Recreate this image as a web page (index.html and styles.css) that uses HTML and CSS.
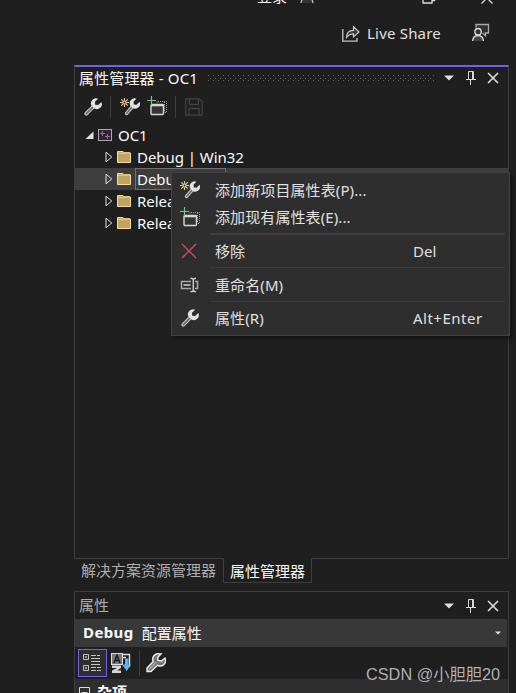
FILE: index.html
```html
<!DOCTYPE html>
<html lang="zh-CN">

<head>
	<meta charset="utf-8">
	<title>属性管理器 - OC1</title>
	<link rel="stylesheet" href="styles.css">
</head>

<body>

	<!-- Shared icons -->
	<svg class="defs" width="0" height="0">
		<symbol id="wrench" viewBox="0 0 18 18">
			<path d="M9.5 8.5L2.3 15.7" stroke="#c8c8c8" stroke-width="3.8" stroke-linecap="round"/>
			<path d="M9 9L2.4 15.6" stroke="#68686a" stroke-width="1.6" stroke-linecap="round"/>
			<path d="M14.2 .8A5 5 0 0 0 7.4 7.4L10.4 10.6A5 5 0 0 0 17.3 4L14.2 7L11.2 6.8L11 3.8Z" fill="#e2e2e2"/>
		</symbol>
		<symbol id="new-wrench" viewBox="0 0 20 18">
			<path d="M12.4 8.6L6.6 15.4" stroke="#c8c8c8" stroke-width="3.6" stroke-linecap="round"/>
			<path d="M12 9.2L6.7 15.3" stroke="#68686a" stroke-width="1.4" stroke-linecap="round"/>
			<path d="M16.4 .8A4.8 4.8 0 0 0 10.2 7.4L13 10.2A4.8 4.8 0 0 0 19.5 3.8L16.6 6.7L13.8 6.6L13.6 3.6Z" fill="#e2e2e2"/>
			<g stroke="#e8cc91" stroke-width="1.1">
				<path d="M4.5 0V2.8M4.5 6.2V9M0 4.5H2.8M6.2 4.5H9M1.3 1.3L3.3 3.3M5.7 5.7L7.7 7.7M7.7 1.3L5.7 3.3M3.3 5.7L1.3 7.7"/>
				<circle cx="4.5" cy="4.5" r="1.5" fill="none"/>
			</g>
		</symbol>
		<symbol id="add-sheet" viewBox="0 0 20 20">
			<path d="M10 6.5V5.5H19.5V16.5H18M17.5 6V16" fill="none" stroke="#aaa" stroke-dasharray="1 1"/>
			<rect x="4" y="8.5" width="12.5" height="10" rx="1" fill="#343434" stroke="#d6d6d6" stroke-width="1.4"/>
			<path d="M4 9.2H16.5" stroke="#d6d6d6" stroke-width="2.2"/>
			<path d="M4.5 0V9M0 4.5H9" stroke="#73c977" stroke-width="1.2"/>
		</symbol>
		<symbol id="folder" viewBox="0 0 14 12">
			<path d="M.5 .5H6L7 2H13.5V11.5H.5Z" fill="#c1a364" stroke="#fbdb96"/>
			<path d="M1 2.6H6L7.5 1.5H13" fill="none" stroke="#f3d28c" stroke-width=".8"/>
		</symbol>
		<symbol id="twisty" viewBox="0 0 8 12">
			<path d="M1 1.2V10.8L6.8 6Z" fill="none" stroke="#e0e0e0"/>
		</symbol>
		<symbol id="arrow" viewBox="0 0 10 6">
			<path d="M0 .5H10L5 5.5Z" fill="#e0e0e0"/>
		</symbol>
		<symbol id="pin" viewBox="0 0 10 14">
			<path d="M2.5 8V.5H7.500V8" fill="none" stroke="#d8d8d8"/>
			<path d="M6.500 1V8M0 8.500H10M4.500 9V14" stroke="#d8d8d8"/>
		</symbol>
		<symbol id="close" viewBox="0 0 12 12">
			<path d="M1 1L11 11M11 1L1 11" stroke="#dcdcdc" stroke-width="1.6"/>
		</symbol>
	</svg>

	<div class="titlebar">
		<span class="login">登录</span>
		<svg class="person" width="14" height="8" viewBox="0 0 14 8"><path d="M1 8C1.500 4 3 3 7 3S12.500 4 13 8" fill="#333" stroke="#bbb" stroke-width="1.300"/></svg>
		<svg class="restore" width="14" height="10" viewBox="0 0 14 10"><path d="M1 0V9H10V0M10 6.500H12.500V0" fill="none" stroke="#ddd" stroke-width="1.300"/></svg>
		<svg class="quit" width="14" height="12" viewBox="0 0 14 12"><path d="M1.500 11.500L12.500 .5M12.500 11.500L1.500 .5" stroke="#ddd" stroke-width="1.300"/></svg>
	</div>

	<div class="sharebar">
		<svg width="18" height="18" viewBox="0 0 18 18">
			<path d="M.8 4V16.200H15V13" fill="none" stroke="#c8c8c8" stroke-width="1.300"/>
			<path d="M4.500 12.500C4.500 7.500 7 5.300 11.500 5.300V1.600L17 7L11.500 12V8.800C8.500 8.800 6.500 9.800 4.500 12.500Z" fill="#3a3a3a" stroke="#c8c8c8" stroke-width="1.200"/>
		</svg>
		<span class="share">Live Share</span>
		<svg class="feedback" width="19" height="19" viewBox="0 0 19 19">
			<path d="M5 4.500V1.500H17.500V10H14.500V13L11.500 10" fill="#303030" stroke="#aaa" stroke-width="1.300"/>
			<circle cx="7" cy="8.700" r="3.200" fill="#333" stroke="#ddd" stroke-width="1.300"/>
			<path d="M1.500 18C2 14 4 12.500 7 12.500S12 14 12.500 18" fill="#444" stroke="#ddd" stroke-width="1.300"/>
		</svg>
	</div>

	<div class="dock">
		<div class="panel manager">
			<div class="header active">
				<span class="manager-title">属性管理器 - OC1</span>
				<svg class="grip" height="7">
					<defs>
						<pattern id="dots" width="5" height="6" patternUnits="userSpaceOnUse">
							<rect width="1" height="1" fill="#666"/>
							<rect x="2" y="3" width="1" height="1" fill="#666"/>
							<rect y="5" width="1" height="1" fill="#666"/>
						</pattern>
					</defs>
					<rect width="100%" height="6" fill="url(#dots)"/>
				</svg>
				<svg class="btn-arrow" width="10" height="6"><use href="#arrow"/></svg>
				<svg class="btn-pin" width="10" height="14"><use href="#pin"/></svg>
				<svg class="btn-close" width="12" height="12"><use href="#close"/></svg>
			</div>

			<div class="toolbar">
				<svg width="18" height="18"><use href="#wrench"/></svg>
				<span class="divider"></span>
				<svg class="t-new" width="20" height="18"><use href="#new-wrench"/></svg>
				<svg class="t-add" width="20" height="20"><use href="#add-sheet"/></svg>
				<span class="divider"></span>
				<svg width="18" height="18" viewBox="0 0 18 18" fill="none" stroke="#424242" stroke-width="1.300">
					<path d="M.8 .8H14.500L17.200 3.500V17.200H.8ZM4.500 1V6.500H13.500V1M4 17V10.500H14V17"/>
				</svg>
			</div>

			<div class="tree">
				<div class="node root">
					<svg width="9" height="9" viewBox="0 0 9 9"><path d="M8.500 .5V8H.5Z" fill="#e0e0e0"/></svg>
					<svg class="project" width="14" height="12" viewBox="0 0 14 12">
						<rect x=".5" y=".5" width="13" height="11" fill="#2a2a2a" stroke="#aaa"/>
						<path d="M4.500 2V7M2 4.500H7M9.500 5V10M7 7.500H12" stroke="#b94fc1"/>
					</svg>
					<span class="label">OC1</span>
				</div>
				<div class="node">
					<svg width="8" height="12"><use href="#twisty"/></svg>
					<svg class="folder" width="14" height="12"><use href="#folder"/></svg>
					<span class="label">Debug | Win32</span>
				</div>
				<div class="node selected">
					<svg width="8" height="12"><use href="#twisty"/></svg>
					<svg class="folder" width="14" height="12"><use href="#folder"/></svg>
					<span class="label">Debug | x64</span>
				</div>
				<div class="node">
					<svg width="8" height="12"><use href="#twisty"/></svg>
					<svg class="folder" width="14" height="12"><use href="#folder"/></svg>
					<span class="label">Release</span>
				</div>
				<div class="node">
					<svg width="8" height="12"><use href="#twisty"/></svg>
					<svg class="folder" width="14" height="12"><use href="#folder"/></svg>
					<span class="label">Release</span>
				</div>
			</div>
		</div>

		<div class="tabs">
			<span class="tab">解决方案资源管理器</span>
			<span class="tab current">属性管理器</span>
		</div>

		<div class="panel props">
			<div class="header">
				<span class="title">属性</span>
				<svg class="btn-arrow" width="10" height="6"><use href="#arrow"/></svg>
				<svg class="btn-pin" width="10" height="14"><use href="#pin"/></svg>
				<svg class="btn-close" width="12" height="12"><use href="#close"/></svg>
			</div>
			<div class="combo">
				<b>Debug</b>
				<span>配置属性</span>
				<svg width="6" height="4"><use href="#arrow"/></svg>
			</div>
			<div class="toolbar prop-tools">
				<span class="toggled">
					<svg width="19" height="18" viewBox="0 0 19 18" fill="none" stroke="#c4c4c4">
						<path d="M.5 .5H5.500V5.500H.5ZM.5 11.500H5.500V16.500H.5ZM2 3H4M3 2V4M2 14H4M3 13V15"/>
						<path d="M8 1.500H13M8 4.500H17M8 7.500H17M8 10.500H17M8 13.500H13M8 16.500H13M14 1.500H17M14 13.500H18M14 16.500H18" stroke-width="1.200"/>
					</svg>
				</span>
				<svg class="sort" width="20" height="20" viewBox="0 0 20 20">
					<rect x=".5" y=".5" width="11" height="11" fill="#777" stroke="#ddd"/>
					<path d="M3 10L6 2.500L9 10M4.300 7.500H7.700" fill="none" stroke="#1c1c1c" stroke-width="1.600"/>
					<path d="M1 12.500H10V15L6 17.500H10V20H1V17.500L6 15H1Z" fill="#d5d5d5"/>
					<path d="M12 1.500H18.500V14M12 4.500H15" fill="none" stroke="#ddd" stroke-width="1.400"/>
					<path d="M14 5.500H17.500V11.500H20L15.700 18L11 11.500H14Z" fill="#57b4f5"/>
				</svg>
				<span class="divider"></span>
				<svg width="20" height="20" viewBox="0 0 20 20">
					<path d="M14 1A5.500 5.500 0 0 0 7.200 8.500L1 15V18.500H5L11.500 12.300A5.500 5.500 0 0 0 19 5L15.500 8L12 7.500L11.700 4.500L15 1Z" fill="#777" stroke="#eee" stroke-width="1.400"/>
					<path d="M3 16.500L10 9.500" stroke="#aaa" stroke-width="1.500"/>
				</svg>
			</div>
			<div class="category">
				<svg width="11" height="11" viewBox="0 0 11 11" fill="none" stroke="#ddd"><path d="M.5 .5H10.500V10.500H.5ZM2.500 5.500H8.500"/></svg>
				<b>杂项</b>
			</div>
		</div>
	</div>

	<div class="menu">
		<div class="item">
			<svg width="20" height="18"><use href="#new-wrench"/></svg>
			<span>添加新项目属性表(P)...</span>
		</div>
		<div class="item">
			<svg width="20" height="20"><use href="#add-sheet"/></svg>
			<span>添加现有属性表(E)...</span>
		</div>
		<div class="sep thick"></div>
		<div class="item">
			<svg width="20" height="16" viewBox="0 0 20 16"><path d="M2 1L16 15M16 1L2 15" stroke="#d04c57" stroke-width="1.400"/></svg>
			<span>移除</span>
			<kbd>Del</kbd>
		</div>
		<div class="sep"></div>
		<div class="item">
			<svg width="20" height="16" viewBox="0 0 20 16" fill="none" stroke="#aaa">
				<path d="M11 4.500H1.500V11.500H11M15 4.500H17.500V11.500H15" stroke-width="1.500"/>
				<path d="M3.500 8H10.500" stroke-width="2"/>
				<path d="M10.500 1.200C12.500 1.200 13.300 1.500 13.300 3V13C13.300 14.500 12.500 14.800 10.500 14.800M16 1.200C14 1.200 13.300 1.500 13.300 3M13.300 13C13.300 14.500 14 14.800 16 14.800" stroke="#ccc" stroke-width="1.400"/>
			</svg>
			<span>重命名(M)</span>
		</div>
		<div class="sep"></div>
		<div class="item last">
			<svg width="20" height="18"><use href="#wrench"/></svg>
			<span>属性(R)</span>
			<kbd class="wide">Alt+Enter</kbd>
		</div>
	</div>

	<div class="watermark">CSDN @小胆胆20</div>

</body>

</html>
```
FILE: styles.css
```css
* {
	box-sizing: border-box;
}

html, body {
	margin: 0;
	height: 693px;
	overflow: hidden;
	background: #1f1f1f;
	font-family: 'Noto Sans', 'Noto Sans CJK SC', sans-serif;
	font-size: 15px;
	line-height: 22px;
	color: #fafafa;
}

body {
	position: relative;
}

svg {
	display: block;
	flex: none;
}

span, b, kbd {
	white-space: nowrap;
}

.defs {
	position: absolute;
}

/* Window top */
.titlebar {
	display: flex;
	align-items: flex-end;
	height: 4px;
	padding-left: 257px;
}
.login {
	width: 30px;
	margin-bottom: -3px;
}
.person {
	margin: 0 0 1px 13px;
}
.restore {
	margin-left: 108px;
}
.quit {
	margin: 0 0 0 44px;
}

.sharebar {
	display: flex;
	align-items: center;
	height: 61px;
	padding: 0 26px 2px 342px;
}
.share {
	margin: -2px 0 0 7px;
	letter-spacing: .2px;
	color: #e0e0e0;
}
.feedback {
	margin: -2px 0 0 auto;
}

/* Panels */
.dock {
	width: 435px;
	margin-left: 74px;
}
.panel {
	border: 1px solid #3d3d3d;
}
.manager {
	height: 494px;
	border-top: 2px solid #7160e8;
}
.header {
	display: flex;
	align-items: center;
	height: 22px;
	padding: 0 9px 0 4px;
}
.manager-title {
	width: 129px;
	letter-spacing: .15px;
}
.grip {
	flex: 1;
	width: 0;
	margin-right: 9px;
}
.btn-arrow {
	margin-left: auto;
}
.btn-pin {
	margin: 0 11px 0 12px;
}

.toolbar {
	display: flex;
	align-items: center;
	height: 35px;
	padding: 1px 0 0 9px;
}
.divider {
	width: 1px;
	height: 22px;
	margin: 0 9px 0 8px;
	background: #3d3d3d;
}
.t-add {
	margin: -2px 0 0 7px;
}

/* Tree */
.node {
	display: flex;
	align-items: center;
	height: 22px;
	padding-left: 30px;
}
.root {
	padding-left: 10px;
}
.project {
	margin: 0 4px 0 4px;
}
.folder {
	margin: -1px 4px 0 4px;
}
.label {
	height: 22px;
	padding: 0 2px;
	line-height: 22px;
	letter-spacing: -.05px;
}
.selected {
	background: #3d3d3d;
}
.selected .label {
	width: 91px;
	border: 1px solid #707070;
	padding: 0 1px;
	line-height: 20px;
}

/* Tabs */
.tabs {
	display: flex;
	height: 32px;
}
.tab {
	height: 25px;
	padding: 0 7px;
	color: #adadad;
}
.current {
	margin-top: -1px;
	padding: 1px 6px 0;
	width: 89px;
	border: 1px solid #3d3d3d;
	border-top-color: #1f1f1f;
	background: #1f1f1f;
	color: #fafafa;
}

/* Properties */
.props {
	height: 110px;
}
.props .header {
	height: 27px;
}
.title {
	margin-top: -1px;
	color: #adadad;
}
.combo {
	display: flex;
	align-items: center;
	height: 28px;
	margin-right: 1px;
	padding: 0 6px 0 8px;
	background: #383838;
}
.combo b {
	margin: -2px 8px 0 0;
	letter-spacing: .4px;
}
.combo svg {
	margin-left: auto;
}
.prop-tools {
	height: 32px;
	padding: 0 0 0 3px;
}
.toggled {
	display: flex;
	align-items: center;
	justify-content: center;
	width: 29px;
	height: 28px;
	border: 1px solid #7160e8;
	background: #2e2e2e;
}
.sort {
	margin-left: 4px;
}
.prop-tools .divider {
	height: 26px;
	margin: 0 6px 0 8px;
}
.category {
	display: flex;
	gap: 7px;
	align-items: center;
	height: 26px;
	padding-left: 4px;
	background: #2e2e2e;
}

/* Context menu */
.menu {
	position: absolute;
	left: 171px;
	top: 172px;
	width: 339px;
	height: 164px;
	padding: 3px 4px 0 8px;
	border: 1px solid #424242;
	background: #2e2e2e;
	box-shadow: 3px 3px 4px rgba(0, 0, 0, .4);
	color: #e0e0e0;
}
.item {
	display: flex;
	align-items: center;
	height: 27px;
}
.item span {
	width: 198px;
	margin-left: 15px;
	letter-spacing: .1px;
}
kbd {
	font: inherit;
}
.wide {
	letter-spacing: .5px;
}
.sep {
	height: 1px;
	margin: 3px 0 3px 30px;
	background: #3d3d3d;
}
.sep.thick {
	height: 2px;
	margin-bottom: 2px;
}
.item.last {
	margin-top: -1px;
}

.watermark {
	position: absolute;
	left: 366px;
	top: 663px;
	font-family: 'Liberation Sans', 'Noto Sans CJK SC', sans-serif;
	font-size: 16.3px;
	white-space: nowrap;
	color: #b0b0b0;
}
```
